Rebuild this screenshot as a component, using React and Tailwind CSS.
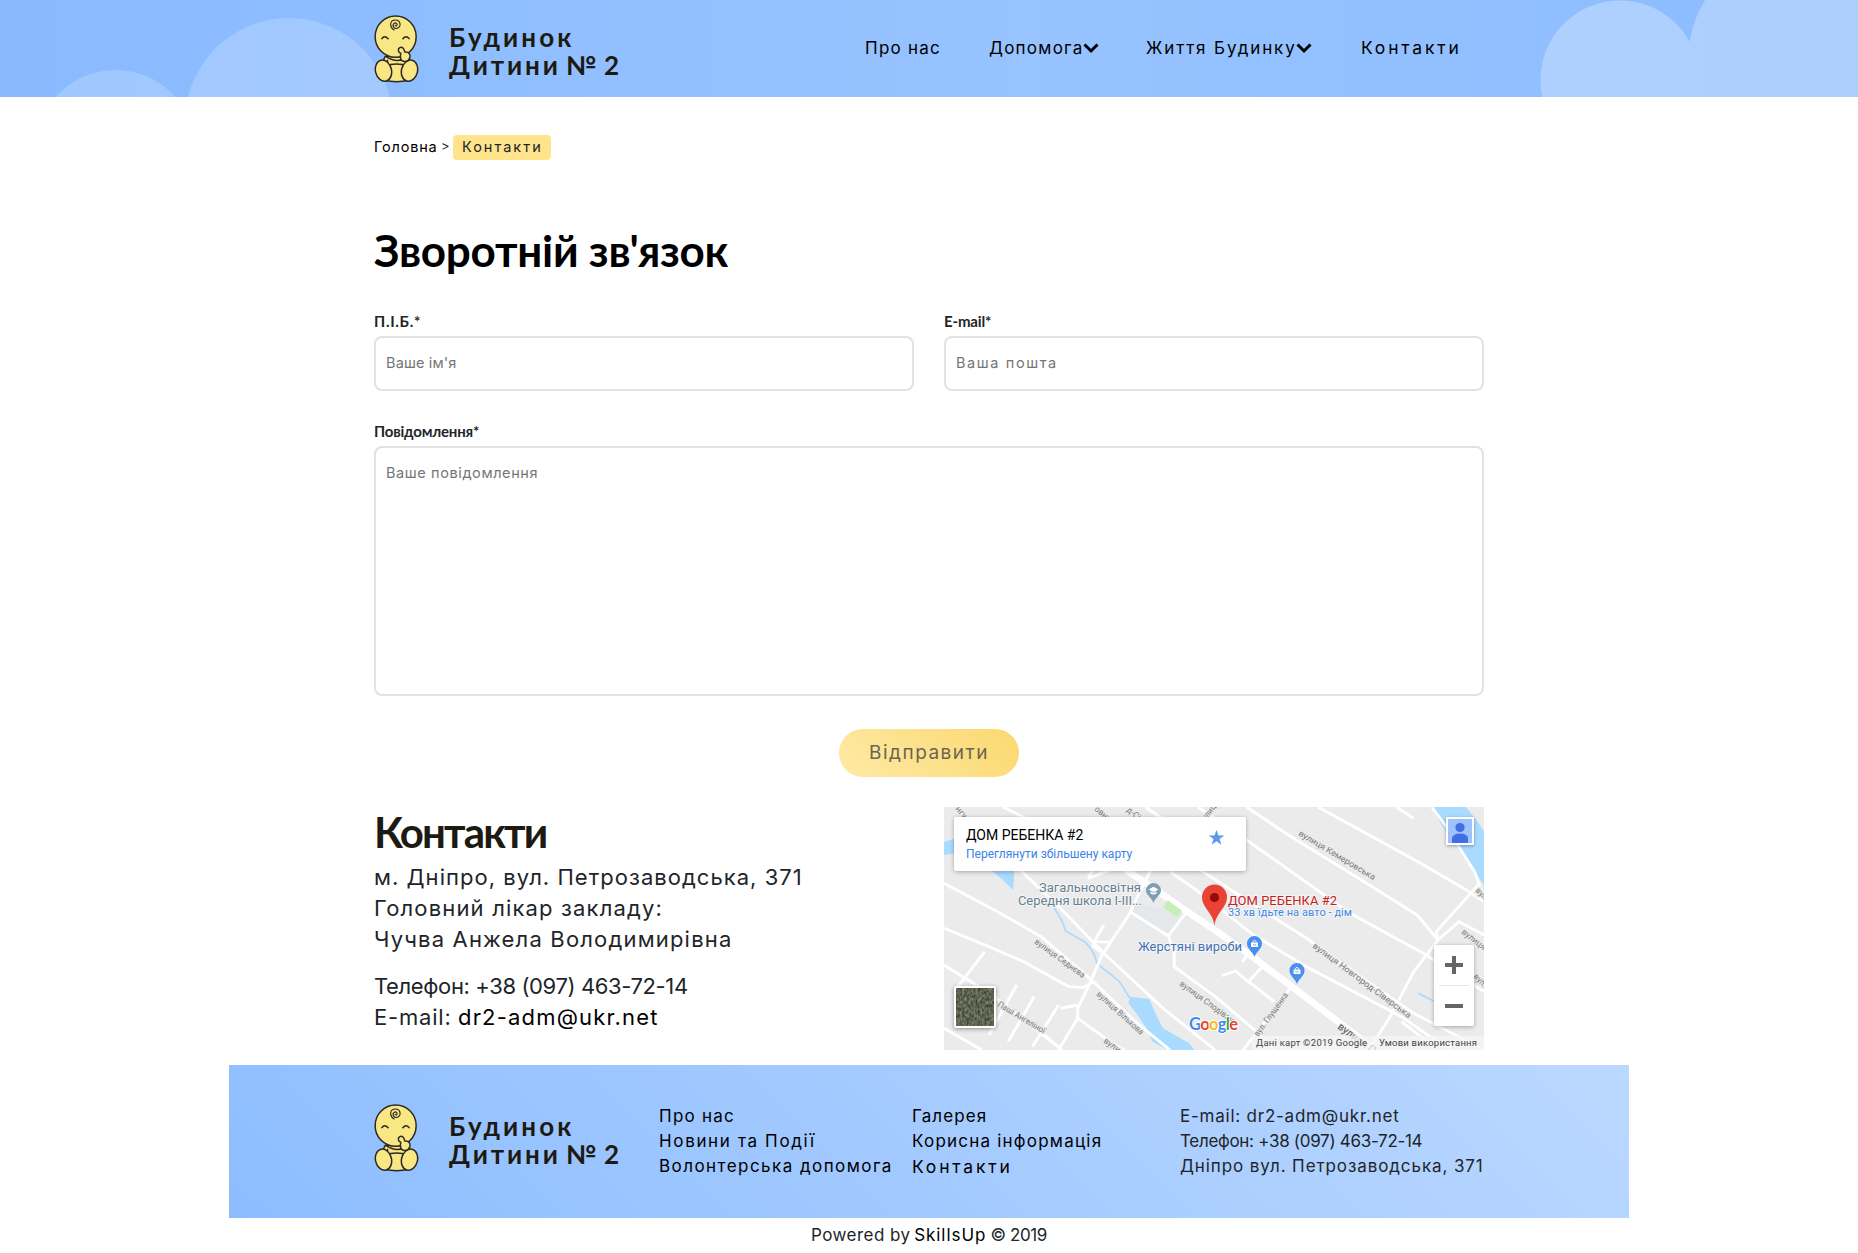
import React from "react";

function Baby() {
  return (
    <svg viewBox="30 28 134 204" className="h-[68px] w-[45px] shrink-0" fill="#f9e784" stroke="#2b2826" strokeWidth="4.5" strokeLinecap="round" strokeLinejoin="round">
      <path d="M63 152C58 160 57 172 60 180V224Q97 232 134 224V180C136 168 134 160 128 154Z" />
      <path d="M66 153Q95 172 118 160M70 164v14M62 180Q97 170 132 180" fill="none" />
      <ellipse cx="94.500" cy="93" rx="61.500" ry="62" />
      <ellipse cx="58" cy="195" rx="24" ry="32" transform="rotate(-14 58 195)" />
      <ellipse cx="136" cy="195" rx="24" ry="32" transform="rotate(14 136 195)" />
      <path d="M103 136c-2-10 8-14 14-8c4 4 3 8 5 11c12-1 18 7 15 17c-4 13-22 16-27 4c-3-8-1-14 0-17c-4-1-6-3-7-7Z" />
      <path d="M53 99q8-12 19 0M116 99q10-12 19 0" fill="none" />
      <path d="M90 73c-16-10-13-30 4-30c15 0 18 18 7 24c-10 5-18-6-12-13c5-5 12 0 9 5c-2 3-5 2-5 0" fill="none" strokeWidth="3.500" />
    </svg>
  );
}

function Logo() {
  return (
    <div className="flex h-[68px] w-[246px] shrink-0 items-start">
      <Baby />
      <div className="ml-[30px] mt-[8px] font-['Lato','Open_Sans',sans-serif] text-[26px] font-bold leading-[28px] text-[#1d1a12]">
        <div className="whitespace-nowrap tracking-[3.1px]">Будинок</div>
        <div className="flex whitespace-nowrap">
          <span className="w-[117px] tracking-[2.9px]">Дитини</span>
          <span className="w-[38px]">№</span>
          <span>2</span>
        </div>
      </div>
    </div>
  );
}

function Chevron() {
  return (
    <svg viewBox="0 0 16 12" className="h-[12px] w-[16px] shrink-0" fill="none" stroke="#000" strokeWidth="3">
      <path d="M1.500 2.500L8 9L14.500 2.500" />
    </svg>
  );
}

function Header() {
  return (
    <header className="relative h-[97px] overflow-hidden bg-linear-to-r from-[#89baff] via-[#97c3ff] via-55% to-[#8cbcff]">
      <svg viewBox="0 0 1858 97" className="absolute inset-0 h-[97px] w-[1858px]">
        <g fill="#fff" opacity=".19">
          <circle cx="115.500" cy="150" r="80" />
          <circle cx="289" cy="122" r="104" />
        </g>
        <g fill="#fff" opacity=".28">
          <circle cx="1620" cy="80" r="79.500" />
          <circle cx="1801" cy="60" r="113" />
        </g>
      </svg>
      <div className="relative mx-auto flex w-[1110px] pt-[15px]">
        <Logo />
        <nav className="ml-[245px] mt-[21px] flex h-[24px] items-center whitespace-nowrap text-[17px] leading-[24px] text-black">
          <a className="w-[124px] tracking-[1.25px]">Про нас</a>
          <a className="flex w-[157px] items-center"><span className="w-[94px] tracking-[1.25px]">Допомога</span><Chevron /></a>
          <a className="flex w-[215px] items-center"><span className="w-[150px] tracking-[1.9px]">Життя Будинку</span><Chevron /></a>
          <a className="text-[17.5px] tracking-[2.8px]">Контакти</a>
        </nav>
      </div>
    </header>
  );
}

function Label({ children, className }) {
  return <label className={"block h-[25px] font-['Lato','Open_Sans',sans-serif] text-[15px] font-bold leading-[20px] text-[#212529] " + className}>{children}</label>;
}

const ROADS = [
  "M11 235L165 320L290 395L440 530L560 650L660 735",
  "M11 370L140 425L240 470L370 545L410 548L440 530",
  "M11 480L80 525L150 570L235 640L350 735",
  "M50 60L235 200L360 325L470 445L640 610L790 735",
  "M605 195L555 300L545 325L465 450L432 530L395 610V640L340 735",
  "M395 640L495 715L530 735",
  "M545 320L655 393L706 323M655 393L672 440V485L790 575L920 690L960 735",
  "M128 440L40 560M220 540L140 690M270 575L195 710M340 600L265 725",
  "M11 670L120 735M395 600L345 610M300 690L350 735",
  "M470 360L442 410L490 412M435 420L480 455M425 220L500 190M440 190L425 220",
  "M180 6L285 60M590 6L650 50M740 6L860 90L1170 320L1300 395L1380 440L1562 560",
  "M880 6L1000 90L1225 235L1370 330L1430 405",
  "M1085 6L1380 175L1500 248L1562 290",
  "M660 200L735 255L900 390L1060 490L1325 635L1400 690L1470 735",
  "M740 190L880 285L1060 405L1200 510L1360 625L1562 735",
  "M1545 240L1425 380L1430 405L1360 500L1290 640L1230 735",
  "M1412 6L1450 60L1535 200L1550 245M1310 6L1360 40",
  "M1430 405L1490 350L1562 390",
  "M1005 550L940 640L870 735M930 480L885 530L960 590M810 512L848 498L885 530M868 470L885 445",
  "M1325 650L1430 735",
];

const STREETS = [
  ["вулиця Кемеровська", 354, 28, 31, 88],
  ["вулиця Седнєва", 90, 136, 36, 60],
  ["вулиця Вільхова", 152, 188, 42, 60],
  ["Паші Ангеліної", 53, 199, 31, 54],
  ["вулиця Сподіван", 235, 178, 36, 65],
  ["вул. Глущенка", 314, 230, -54, 52],
  ["вулиця Новгород-Сіверська", 368, 140, 36.5, 120],
  ["вулиця", 159, 235, 36, 28],
  ["вулиця", 517, 126, 38, 28],
  ["вул.", 531, 84, 45, 15],
  ["вул.", 529, 170, 45, 15],
  ["нгул", 11, 2, 50, 18],
  ["овниц", 150, 3, 40, 24],
  ["д-Сів", 182, 4, 38, 20],
  ["вулиця", 259, 17, -52, 26],
];

function ShopPin({ x, y }) {
  return (
    <g transform={`translate(${x} ${y})`}>
      <path d="M0 0C-1.500-5-7.500-8-7.500-13.500a7.500 7.500 0 0 1 15 0C7.500-8 1.500-5 0 0Z" fill="#4a8ff0" />
      <path d="M-3.500-14.500h7v4.500h-7Z" fill="#fff" />
      <path d="M-1.700-14.500v-1q1.700-2.300 3.400 0v1" fill="none" stroke="#fff" strokeWidth="1" />
      <path d="M-1.500-12.500q1.500 1.500 3 0" fill="none" stroke="#4a8ff0" strokeWidth=".8" />
    </g>
  );
}

function MapView() {
  return (
    <div className="relative h-[243px] w-[540px] overflow-hidden bg-[#ebebeb]">
      <svg viewBox="0 0 540 243" className="h-[243px] w-[540px] font-['Roboto',sans-serif]">
        <g transform="scale(.34819 .33333) translate(-11 -6)" fill="none" strokeLinejoin="round">
          <path d="M11 110L45 100V145L11 150ZM140 190H213L210 255L180 225ZM545 575L600 582L625 640L640 670L715 715L730 735H655L610 710L590 665L560 620L541 595ZM1412 6H1510L1540 45L1562 80V240L1500 150L1440 60Z" fill="#a9daff" />
          <path d="M560 290L625 310L706 323L655 393L545 325Z" fill="#e4e8ea" />
          <path d="M325 305Q355 350 360 378L415 410Q445 440 450 475L515 530L545 580M1372 565L1425 592M1500 608L1530 622" stroke="#a9daff" strokeWidth="5" />
          {ROADS.map((d) => <path key={d} d={d} stroke="#fff" strokeWidth="8.500" />)}
          <path d="M330 50L520 185L620 255L710 320L800 383L900 458L1010 545L1250 735" stroke="#fff" strokeWidth="20" />
          <path d="M653 286L694 316L682 337L640 307Z" fill="#c8eeb8" />
        </g>
        <g fontSize="8.500" fill="#7b7b7b" stroke="#ebebeb" strokeWidth="2" paintOrder="stroke">
          {STREETS.map(([t, x, y, a, w]) => (
            <text key={t + x} transform={`translate(${x} ${y}) rotate(${a})`} textLength={w} lengthAdjust="spacingAndGlyphs">{t}</text>
          ))}
          <text transform="translate(393 221) rotate(36.500)" fontSize="10.500" fill="#555" textLength="56">вулиця Пос</text>
        </g>
        <g fontSize="13" stroke="#f5f5f5" strokeWidth="2" paintOrder="stroke">
          <text x="95" y="85" fill="#66828f" textLength="102">Загальноосвітня</text>
          <text x="74" y="98" fill="#66828f" textLength="124">Середня школа I-III...</text>
          <text x="284" y="98" fill="#c5221f" textLength="109">ДОМ РЕБЕНКА #2</text>
          <text x="284" y="109" fontSize="11" fill="#3f87e8" textLength="124">33 хв їдьте на авто - дім</text>
          <text x="194" y="144" fill="#4272b4" textLength="104">Жерстяні вироби</text>
        </g>
        <path d="M209.500 96C208 91 202 88 202 83.500a7.500 7.500 0 0 1 15 0C217 88 211 91 209.500 96Z" fill="#7c9fb4" />
        <path d="M204.500 82.500l5-2.700l5 2.700l-5 2.700ZM206.500 84.500v2q3 2 6 0v-2l-3 1.500Z" fill="#fff" />
        <ShopPin x={310.500} y={150} />
        <ShopPin x={353} y={177} />
        <path d="M270.500 119C269.500 106 258 101 258 90a12.500 12.500 0 0 1 25 0C283 101 271.500 106 270.500 119Z" fill="#ea4335" />
        <circle cx="270.500" cy="90.500" r="4.600" fill="#960a0a" />
        <text x="245" y="223" fontFamily="Lato" fontWeight="700" fontSize="16.500" textLength="49" stroke="#fff" strokeWidth="2" paintOrder="stroke">
          <tspan fill="#4285f4">G</tspan><tspan fill="#ea4335">o</tspan><tspan fill="#fbbc05">o</tspan><tspan fill="#4285f4">g</tspan><tspan fill="#34a853">l</tspan><tspan fill="#ea4335">e</tspan>
        </text>
        <rect x="308" y="229" width="232" height="14" fill="#f5f5f5" opacity=".75" />
        <g fontSize="9.500" fill="#444">
          <text x="312" y="239" textLength="111">Дані карт ©2019 Google</text>
          <text x="435" y="239" textLength="98">Умови використання</text>
        </g>
      </svg>
      <div className="absolute left-[10px] top-[10px] flex h-[54px] w-[292px] justify-between rounded-[2px] bg-white pl-[12px] pr-[21px] font-['Roboto',sans-serif] shadow-[0_1px_4px_rgba(0,0,0,0.3)]">
        <div className="whitespace-nowrap pt-[10px]">
          <div className="text-[14px] leading-[17px] tracking-[0px] text-black">ДОМ РЕБЕНКА #2</div>
          <div className="mt-[2px] text-[12px] leading-[16px] tracking-[0px] text-[#3b82e6]">Переглянути збільшену карту</div>
        </div>
        <svg viewBox="0 0 24 24" className="mt-[12px] h-[17px] w-[17px]" fill="#5b9ae8"><path d="M12 1l2.700 8H23l-6.700 5 2.500 8.200L12 17.200 5.200 22.200 7.700 14 1 9h8.300z" /></svg>
      </div>
      <div className="absolute left-[502px] top-[10px] h-[28px] w-[28px] border-2 border-white bg-[#9fc2ff] shadow-[0_1px_3px_rgba(0,0,0,0.35)]">
        <svg viewBox="0 0 24 24" className="h-full w-full" fill="#3f6fe0"><circle cx="12" cy="8.500" r="4.600" /><path d="M4 24v-5q1-4.500 8-4.500t8 4.500v5Z" /></svg>
      </div>
      <div className="absolute left-[490px] top-[138px] h-[81px] w-[40px] rounded-[2px] bg-white shadow-[0_1px_4px_rgba(0,0,0,0.3)]">
        <svg viewBox="0 0 40 81" className="h-full w-full"><path d="M11 20h18M20 11v18M11 61h18" stroke="#666" strokeWidth="4" /><path d="M5 40.500h30" stroke="#e6e6e6" /></svg>
      </div>
      <div className="absolute left-[10px] top-[179px] h-[42px] w-[42px] rounded-[2px] border-2 border-white bg-[#5c6553] shadow-[0_1px_4px_rgba(0,0,0,0.4)]">
        <svg viewBox="0 0 38 38" className="h-full w-full">
          <filter id="terrain" colorInterpolationFilters="sRGB">
            <feTurbulence type="fractalNoise" baseFrequency=".45 .3" numOctaves="3" seed="4" />
            <feColorMatrix values=".5 0 0 0 .12 .5 0 0 0 .14 .45 0 0 0 .09 0 0 0 0 1" />
          </filter>
          <rect width="38" height="38" filter="url(#terrain)" />
        </svg>
      </div>
    </div>
  );
}

function Footer() {
  return (
    <footer>
      <div className="mx-auto h-[153px] w-[1400px] bg-linear-[45deg] from-[#8dbdff] to-[#bbd8ff]">
        <div className="mx-auto flex w-[1110px] whitespace-nowrap pt-[39px] text-[17px] leading-[25px] text-black">
          <Logo />
          <div className="ml-[39px] w-[253px]">
            <div className="tracking-[1.25px]">Про нас</div>
            <div className="tracking-[1.65px]">Новини та Події</div>
            <div className="tracking-[1.45px]">Волонтерська допомога</div>
          </div>
          <div className="w-[268px]">
            <div className="tracking-[1.1px]">Галерея</div>
            <div className="tracking-[1.22px]">Корисна інформація</div>
            <div className="text-[17.5px] tracking-[2.8px]">Контакти</div>
          </div>
          <div className="text-[#212529]">
            <div className="tracking-[0.77px]">E-mail: dr2-adm@ukr.net</div>
            <div className="tracking-[-0.3px]">Телефон: +38 (097) 463-72-14</div>
            <div className="tracking-[0.9px]">Дніпро вул. Петрозаводська, 371</div>
          </div>
        </div>
      </div>
      <div className="mx-auto flex w-[236px] whitespace-nowrap pt-[5px] text-[17px] leading-[25px] text-[#212529]">
        <span className="w-[104px] tracking-[0.45px]">Powered by</span>
        <span className="w-[77px] tracking-[0.95px] text-black">SkillsUp</span>
        <span className="tracking-[-0.4px]">© 2019</span>
      </div>
    </footer>
  );
}

const FIELD = "block rounded-[8px] border-2 border-[#e2e2e2] bg-white px-[10px] text-[14.5px] placeholder-[#757575] outline-none ";

export default function App() {
  return (
    <div className="h-[1253px] w-[1858px] overflow-hidden bg-white font-['Inter','Open_Sans',sans-serif] text-[#212529]">
      <Header />
      <main className="mx-auto w-[1110px]">
        <div className="mt-[38px] flex h-[25px] items-center whitespace-nowrap text-[14.5px] leading-[23px]">
          <span className="w-[67px] -translate-y-px tracking-[0.8px] text-black">Головна</span>
          <span className="w-[12px] -translate-y-px text-[13px]">&gt;</span>
          <span className="h-[25px] w-[98px] rounded-[4px] bg-[#ffe48c] pl-[9px] leading-[24px] tracking-[2px]">Контакти</span>
        </div>
        <h1 className="mt-[62px] h-[58px] whitespace-nowrap font-['Lato','Open_Sans',sans-serif] text-[44px] font-bold leading-[56px] tracking-[-0.25px] text-black">Зворотній зв'язок</h1>
        <form>
          <div className="mt-[31px] flex gap-[30px]">
            <div>
              <Label className="tracking-[0.7px]">П.І.Б.*</Label>
              <input placeholder="Ваше ім'я" className={FIELD + "h-[55px] w-[540px] pb-[2px] tracking-[0.15px]"} />
            </div>
            <div>
              <Label className="tracking-[-0.15px]">E-mail*</Label>
              <input placeholder="Ваша пошта" className={FIELD + "h-[55px] w-[540px] pb-[2px] tracking-[1.6px]"} />
            </div>
          </div>
          <div className="mt-[30px]">
            <Label className="tracking-[-0.2px]">Повідомлення*</Label>
            <textarea placeholder="Ваше повідомлення" className={FIELD + "h-[250px] w-[1110px] resize-none pt-[14px] leading-[22px] tracking-[0.6px]"} />
          </div>
          <button type="button" className="mx-auto mt-[33px] block h-[48px] w-[180px] rounded-full bg-linear-[45deg] from-[#ffe9a6] to-[#fad970] text-[19px] tracking-[1.5px] text-[#6c6551]">Відправити</button>
        </form>
        <div className="mt-[30px] flex h-[258px] gap-[30px]">
          <section className="w-[540px] whitespace-nowrap text-[22px] leading-[31px]">
            <h2 className="h-[55px] font-['Lato','Open_Sans',sans-serif] text-[42px] font-bold leading-[50px] tracking-[-1.85px] text-[#1d1a12]">Контакти</h2>
            <div className="tracking-[1.03px]">м. Дніпро, вул. Петрозаводська, 371</div>
            <div className="tracking-[1.16px]">Головний лікар закладу:</div>
            <div className="tracking-[1.18px]">Чучва Анжела Володимирівна</div>
            <div className="mt-[16px] tracking-[-0.38px]">Телефон: +38 (097) 463-72-14</div>
            <div className="flex">
              <span className="w-[84px] tracking-[0.8px]">E-mail:</span>
              <a className="tracking-[1.18px] text-black">dr2-adm@ukr.net</a>
            </div>
          </section>
          <MapView />
        </div>
      </main>
      <Footer />
    </div>
  );
}
